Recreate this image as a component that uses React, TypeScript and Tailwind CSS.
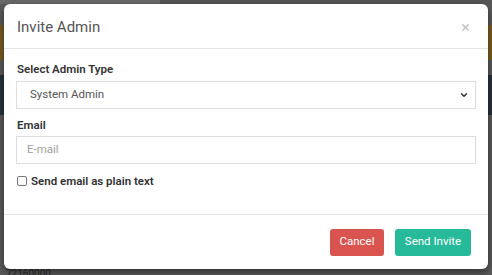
import { ChevronDown, X } from "lucide-react";

function Backdrop() {
  return (
    <div className="flex h-[275px] w-[492px] flex-col overflow-hidden bg-[#5b5b5b]">
      <div className="flex h-[4px]">
        <div className="w-[160px] bg-[#6a6a6a]" />
        <div className="flex-1 bg-[#575757]" />
      </div>
      <div className="h-[21px]" />
      <div className="h-[35px] bg-[#7a5c22]" />
      <div className="h-[15px]" />
      <div className="h-[40px] bg-[#28323d]" />
      <div className="flex-1" />
      <div className="h-[7px] overflow-hidden pl-[6px] font-['Roboto',sans-serif] text-[10px] leading-[12px] text-[#2a2a2a]">72160000</div>
    </div>
  );
}

function InviteAdminModal() {
  return (
    <div className="absolute left-[4px] top-[4px] flex h-[265px] w-[484px] flex-col rounded-[6px] bg-white font-['Roboto',sans-serif] text-[#333] shadow-[0_3px_9px_rgba(0,0,0,0.5)]">
      <div className="flex h-[45px] items-center justify-between border-b border-[#e5e5e5] pl-[13px] pr-[17px] pt-[2px]">
        <h4 className="text-[15px] leading-[18px] text-[#555]">Invite Admin</h4>
        <X className="h-[11px] w-[11px] text-[#c4c4c4]" strokeWidth={3.5} />
      </div>
      <div className="flex flex-col px-[12px] pt-[13px]">
        <label className="pl-[1px] text-[11.5px] font-semibold leading-[14px]">Select Admin Type</label>
        <div className="mt-[5px] flex h-[28px] items-center justify-between border border-[#ddd] pl-[13px] pr-[6px] text-[11.5px] text-[#555]">
          <span>System Admin</span>
          <ChevronDown className="h-[10px] w-[10px] text-[#333]" strokeWidth={3.5} />
        </div>
        <label className="mt-[9px] pl-[1px] text-[11.5px] font-semibold leading-[14px]">Email</label>
        <div className="mt-[4px] flex h-[28px] items-center border border-[#ddd] pl-[10px] text-[11.5px] text-[#a0a0a0]">
          E-mail
        </div>
        <label className="mt-[10px] flex items-center gap-[4px] pl-[1px] text-[11.5px] font-semibold leading-[14px]">
          <span className="h-[10px] w-[10px] rounded-[2px] border border-[#767676]" />
          Send email as plain text
        </label>
      </div>
      <div className="mt-auto flex h-[55px] items-center justify-end gap-[11px] border-t border-[#e5e5e5] pr-[17px]">
        <button className="h-[27px] w-[54px] rounded-[3px] bg-[#d9534f] text-[11.5px] text-white">Cancel</button>
        <button className="h-[27px] w-[76px] rounded-[3px] bg-[#26b99a] text-[11.5px] text-white">Send Invite</button>
      </div>
    </div>
  );
}

export default function App() {
  return (
    <div className="relative h-[275px] w-[492px] overflow-hidden">
      <Backdrop />
      <InviteAdminModal />
    </div>
  );
}
